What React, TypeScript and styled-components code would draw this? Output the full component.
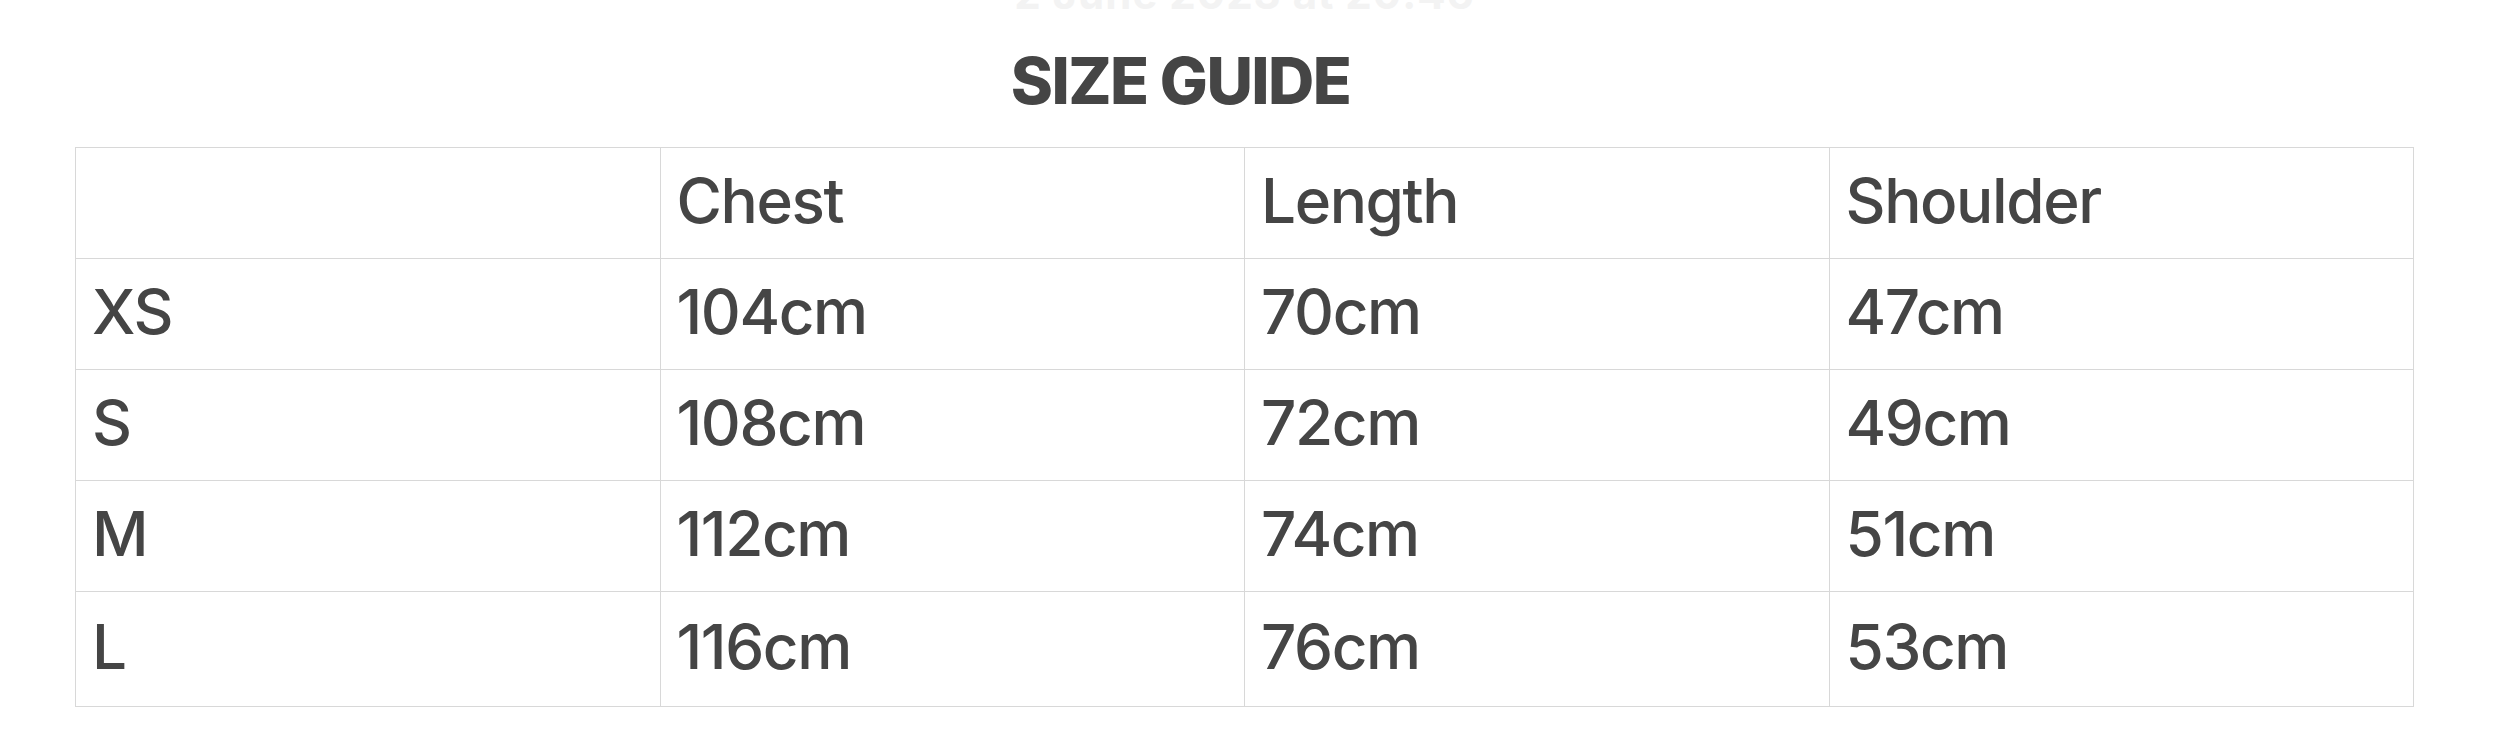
import styled, { createGlobalStyle } from "styled-components";

const GlobalStyle = createGlobalStyle`
  html, body {
    margin: 0;
    padding: 0;
    background: #ffffff;
  }
  body {
    font-family: Inter, "Liberation Sans", Arial, sans-serif;
    color: #444444;
  }
`;

const Page = styled.div`
  width: 2494px;
  height: 745px;
  overflow: hidden;
  padding: 0 80px 0 75px;
  box-sizing: border-box;
`;

const Stamp = styled.div`
  margin-top: -32px;
  height: 40px;
  text-align: center;
  font-size: 42px;
  font-weight: 700;
  color: #f3f3f3;
  letter-spacing: 1px;
  padding-left: 0;
`;

const TitleBar = styled.div`
  display: flex;
  justify-content: center;
  align-items: center;
  padding: 6px 128px 0 0;
  height: 139px;
  box-sizing: border-box;
`;

const Title = styled.h2`
  margin: 0;
  font-size: 64px;
  font-weight: 800;
  letter-spacing: -1.6px;
  color: #454545;
  line-height: 1;
`;

const Table = styled.table`
  width: 100%;
  border-collapse: collapse;
  table-layout: fixed;

  tr:last-child td {
    height: 115px;
  }
`;

const Cell = styled.td`
  border: 1px solid #d8d8d8;
  height: 111px;
  padding: 0 16px 4px;
  box-sizing: border-box;
  font-size: 62px;
  font-weight: 550;
  letter-spacing: -1.4px;
  color: #454545;
  vertical-align: middle;
  line-height: 1;
`;

const headers = ["", "Chest", "Length", "Shoulder"];

const rows = [
  ["XS", "104cm", "70cm", "47cm"],
  ["S", "108cm", "72cm", "49cm"],
  ["M", "112cm", "74cm", "51cm"],
  ["L", "116cm", "76cm", "53cm"],
];

const App = () => {
  return (
    <Page>
      <GlobalStyle />
      <Stamp>2 June 2023 at 20:46</Stamp>
      <TitleBar>
        <Title>SIZE GUIDE</Title>
      </TitleBar>
      <Table>
        <tbody>
          <tr>
            {headers.map((h, i) => (
              <Cell key={i}>{h}</Cell>
            ))}
          </tr>
          {rows.map((row, r) => (
            <tr key={r}>
              {row.map((val, c) => (
                <Cell key={c}>{val}</Cell>
              ))}
            </tr>
          ))}
        </tbody>
      </Table>
    </Page>
  );
};

export default App;
